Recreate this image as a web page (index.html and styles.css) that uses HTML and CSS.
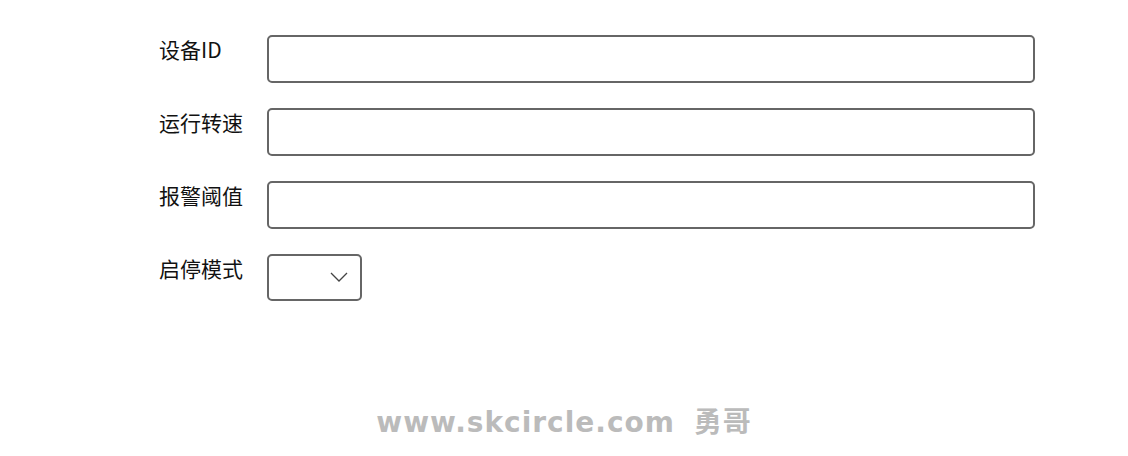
FILE: index.html
```html
<!DOCTYPE html>
<html lang="zh-CN">
<head>
  <meta charset="UTF-8" />
  <title>设备参数</title>
  <link rel="stylesheet" href="styles.css">
</head>
<body>
  <form class="device-form">
    <div class="form-row">
      <label for="deviceId">设备ID</label>
      <input type="text" id="deviceId" name="deviceId">
    </div>
    <div class="form-row">
      <label for="speed">运行转速</label>
      <input type="text" id="speed" name="speed">
    </div>
    <div class="form-row">
      <label for="threshold">报警阈值</label>
      <input type="text" id="threshold" name="threshold">
    </div>
    <div class="form-row">
      <label for="mode">启停模式</label>
      <div class="select-box">
        <select id="mode" name="mode">
          <option value=""></option>
          <option value="auto">自动</option>
          <option value="manual">手动</option>
        </select>
        <svg class="chevron" width="18" height="10" viewBox="0 0 18 10">
          <path d="M1 1 L9 9 L17 1" fill="none" stroke="#444" stroke-width="1.3"/>
        </svg>
      </div>
    </div>
  </form>
  <div class="watermark">www.skcircle.com <span class="cn">勇哥</span></div>
</body>
</html>
```

FILE: styles.css
```css
body {
  margin: 0;
  font-family: "Noto Sans CJK SC", "Noto Sans", sans-serif;
  background: #fff;
  color: #111;
}
.device-form {
  padding: 35px 0 0 159px;
}
.form-row {
  display: flex;
  align-items: flex-start;
  margin-bottom: 25px;
}
.form-row label {
  width: 108px;
  font-size: 21px;
  line-height: 28px;
}
.form-row input {
  width: 768px;
  height: 48px;
  box-sizing: border-box;
  border: 2px solid #666;
  border-radius: 5px;
  font-size: 16px;
  padding: 0 10px;
}
.select-box {
  position: relative;
  width: 95px;
  height: 47px;
}
.select-box select {
  appearance: none;
  width: 100%;
  height: 100%;
  box-sizing: border-box;
  border: 2px solid #666;
  border-radius: 5px;
  background: #fff;
  font-size: 16px;
  padding: 0 10px;
}
.chevron {
  position: absolute;
  left: 63px;
  top: 18px;
  pointer-events: none;
}
.watermark {
  margin-top: 99px;
  text-align: center;
  font-family: "DejaVu Sans", "Noto Sans CJK SC", sans-serif;
  font-weight: bold;
  font-size: 28px;
  color: #bbb;
  letter-spacing: 1px;
}
.watermark .cn {
  margin-left: 8px;
}
```
